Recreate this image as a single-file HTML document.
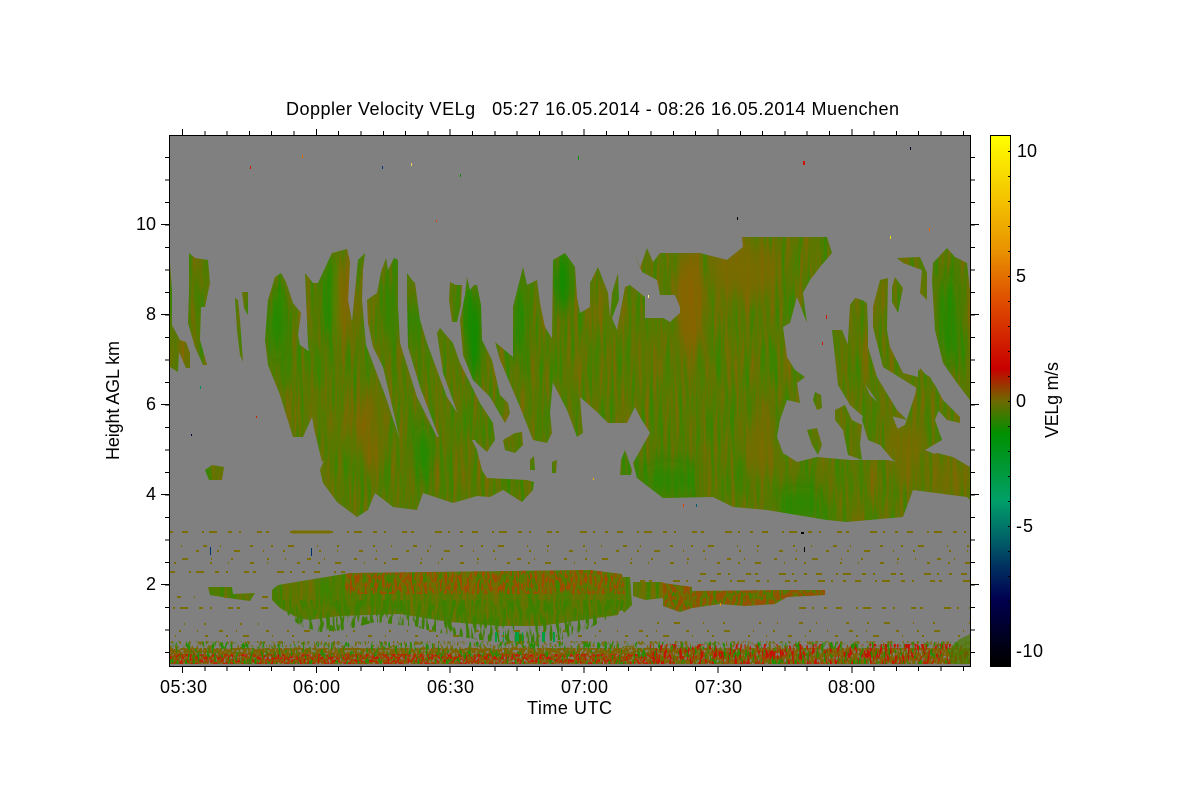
<!DOCTYPE html>
<html><head><meta charset="utf-8"><title>Doppler Velocity VELg</title>
<style>html,body{margin:0;padding:0;background:#fff}svg{display:block}
text{font-family:"Liberation Sans",sans-serif;font-size:18px;fill:#000}</style></head>
<body>
<svg width="1200" height="800" viewBox="0 0 1200 800" xmlns="http://www.w3.org/2000/svg">
<defs>
<linearGradient id="cb" gradientUnits="userSpaceOnUse" x1="0" y1="135" x2="0" y2="666">
<stop offset="0" stop-color="#ffff00"/><stop offset=".16" stop-color="#f0b000"/><stop offset=".222" stop-color="#e89000"/><stop offset=".286" stop-color="#e06000"/><stop offset=".31" stop-color="#e05000"/><stop offset=".44" stop-color="#c80000"/><stop offset=".5" stop-color="#706800"/><stop offset=".562" stop-color="#009000"/><stop offset=".688" stop-color="#00a068"/><stop offset=".762" stop-color="#006068"/><stop offset=".814" stop-color="#003060"/><stop offset=".875" stop-color="#000050"/><stop offset=".97" stop-color="#000010"/><stop offset="1" stop-color="#000"/>
</linearGradient>
<filter id="noise" filterUnits="userSpaceOnUse" x="169" y="135" width="802" height="532" color-interpolation-filters="sRGB">
<feTurbulence type="fractalNoise" baseFrequency="0.28 0.018" numOctaves="3" seed="7"/>
<feColorMatrix type="matrix" values=".5 0 0 0 .1  -.2 0 0 0 .57  0 0 0 0 0  0 0 0 0 1"/>
</filter>
<filter id="blur"><feGaussianBlur stdDeviation="4 12"/></filter>
<filter id="spOlive" filterUnits="userSpaceOnUse" x="170" y="625" width="800" height="40" color-interpolation-filters="sRGB"><feTurbulence type="fractalNoise" baseFrequency=".42 .22" numOctaves="2" seed="3"/><feColorMatrix type="matrix" values="0 0 0 0 .47  0 0 0 0 .42  0 0 0 0 0  14 0 0 0 -7.6"/></filter>
<filter id="spDense" filterUnits="userSpaceOnUse" x="170" y="648" width="800" height="16" color-interpolation-filters="sRGB"><feTurbulence type="fractalNoise" baseFrequency=".45 .3" numOctaves="2" seed="11"/><feColorMatrix type="matrix" values="0 0 0 0 .5  0 0 0 0 .38  0 0 0 0 0  14 0 0 0 -5.2"/></filter>
<filter id="spRedL" filterUnits="userSpaceOnUse" x="170" y="654" width="490" height="10" color-interpolation-filters="sRGB"><feTurbulence type="fractalNoise" baseFrequency=".5 .35" numOctaves="2" seed="5"/><feColorMatrix type="matrix" values="0 0 0 0 .76  0 0 0 0 .1  0 0 0 0 0  14 0 0 0 -7"/></filter>
<filter id="spRedR" filterUnits="userSpaceOnUse" x="650" y="644" width="320" height="20" color-interpolation-filters="sRGB"><feTurbulence type="fractalNoise" baseFrequency=".4 .1" numOctaves="2" seed="9"/><feColorMatrix type="matrix" values="0 0 0 0 .76  0 0 0 0 .08  0 0 0 0 0  14 0 0 0 -7.4"/></filter>
<filter id="spGreen" filterUnits="userSpaceOnUse" x="170" y="642" width="800" height="22" color-interpolation-filters="sRGB"><feTurbulence type="fractalNoise" baseFrequency=".42 .12" numOctaves="2" seed="21"/><feColorMatrix type="matrix" values="0 0 0 0 .14  0 0 0 0 .55  0 0 0 0 0  14 0 0 0 -8.2"/></filter>
<filter id="spBandG" filterUnits="userSpaceOnUse" x="272" y="600" width="355" height="46" color-interpolation-filters="sRGB"><feTurbulence type="fractalNoise" baseFrequency=".3 .06" numOctaves="2" seed="14"/><feColorMatrix type="matrix" values="0 0 0 0 .24  0 0 0 0 .5  0 0 0 0 0  14 0 0 0 -7"/></filter>
<filter id="spBandR" filterUnits="userSpaceOnUse" x="345" y="570" width="280" height="24" color-interpolation-filters="sRGB"><feTurbulence type="fractalNoise" baseFrequency=".4 .12" numOctaves="2" seed="17"/><feColorMatrix type="matrix" values="0 0 0 0 .62  0 0 0 0 .3  0 0 0 0 0  14 0 0 0 -7"/></filter>
<filter id="spBrown" filterUnits="userSpaceOnUse" x="663" y="583" width="165" height="30" color-interpolation-filters="sRGB"><feTurbulence type="fractalNoise" baseFrequency=".3 .14" numOctaves="2" seed="2"/><feColorMatrix type="matrix" values="0 0 0 0 .58  0 0 0 0 .32  0 0 0 0 0  14 0 0 0 -6.4"/></filter>
<clipPath id="fringe"><polygon points="274,600 285,612 300,626 320,632 345,630 375,622 410,626 445,634 480,640 520,644 560,640 590,628 622,610 625,600"/></clipPath>
<clipPath id="c">
<polygon points="265,340 268,300 275,277 281,273 286,282 293,303 301,313 298,335 300,345 318,358 330,420 335,450 322,462 315,433 312,417 303,437 293,437 280,395 268,365"/>
<polygon points="305,273 313,283 318,283 332,253 347,249 350,262 348,300 352,322 358,260 365,253 363,270 362,300 366,345 385,395 400,440 398,480 340,480 320,440 308,345"/>
<polygon points="367,300 377,293 381,272 386,258 388,270 394,258 398,260 398,307 400,343 417,397 437,437 420,453 400,440 383,367 373,347 368,323"/>
<polygon points="407,273 412,280 415,283 420,320 427,343 447,397 460,417 475,440 440,440 420,387 408,347 407,300"/>
<polygon points="437,333 440,328 453,343 460,363 480,403 493,423 495,440 487,452 477,443 460,420 443,373"/>
<polygon points="450,282 456,285 462,285 461,305 457,322 452,322 449,300"/>
<polygon points="467,277 470,290 474,285 477,285 481,305 482,340 492,360 500,395 508,403 510,413 505,423 490,397 473,380 463,355 460,320 465,295"/>
<polygon points="495,342 513,357 513,307 523,267 527,285 537,280 540,303 545,327 553,340 553,380 550,413 552,433 547,443 533,440 520,407 500,360"/>
<polygon points="503,440 515,433 522,432 523,445 515,453 505,450"/>
<polygon points="530,460 534,456 535,470 530,470"/><polygon points="552,462 557,460 556,473 552,473"/>
<polygon points="320,470 327,453 340,440 470,436 477,450 482,470 487,478 527,480 534,482 533,490 522,502 503,490 490,497 477,496 453,503 423,493 417,510 393,507 375,493 368,510 357,517 337,502 323,483"/>
<polygon points="205,470 212,465 224,467 222,480 209,480"/>
<polygon points="189,253 195,258 208,260 210,283 205,307 201,307 200,340 207,365 203,365 195,347 188,323 189,290"/>
<polygon points="170,263 172,290 172,325 180,340 186,342 190,353 190,368 186,368 179,352 178,372 170,367"/>
<polygon points="242,292 248,292 248,315 244,308"/><polygon points="235,298 238,300 240,320 243,362 240,355 237,330"/>
<polygon points="553,260 565,253 575,267 577,297 580,313 590,307 590,283 598,267 608,293 610,317 612,293 618,273 619,300 612,318 617,330 625,287 630,285 645,297 645,318 663,318 672,323 680,340 670,425 650,430 643,420 635,407 627,423 617,423 608,423 597,412 580,397 582,423 583,433 577,437 567,410 553,383 552,340"/>
<polygon points="633,250 640,268 647,248 653,262 660,253 700,253 727,260 743,247 742,237 827,237 832,253 820,267 810,280 803,293 807,323 797,297 790,323 783,327 787,357 795,370 805,377 797,383 800,403 787,400 780,420 777,437 783,453 797,462 817,457 850,460 887,460 903,463 937,453 953,457 970,467 970,500 967,497 913,490 903,517 847,522 827,520 767,510 733,507 713,497 663,498 637,478 633,463 650,433 640,417 635,407 645,395 665,330 672,320 680,313 680,307 675,295 660,295 657,280 642,272"/>
<polygon points="621,460 625,450 632,470 631,475 620,475"/>
<polygon points="807,430 817,428 822,445 818,455 812,445"/>
<polygon points="815,392 821,395 822,408 817,410 813,400"/>
<polygon points="832,330 842,330 852,355 870,395 892,415 898,430 895,450 880,440 867,420 850,405 838,385"/>
<polygon points="850,305 855,298 862,300 867,303 868,330 868,347 877,377 897,410 907,420 887,415 867,387 847,357"/>
<polygon points="873,307 880,280 888,278 887,330 890,347 903,373 918,377 918,370 930,377 943,400 960,417 960,423 947,420 920,390 883,367 873,327"/>
<polygon points="892,287 895,277 903,288 898,313 892,302"/>
<polygon points="897,258 920,257 927,273 927,300 920,293 922,270 903,263"/>
<polygon points="933,263 947,248 955,257 967,263 970,290 970,400 957,383 943,363 935,330 932,280"/>
<polygon points="865,405 875,425 895,430 905,425 915,395 920,368 935,385 943,400 935,420 942,440 925,450 937,455 903,465 893,460 880,445 868,440 862,420"/>
<polygon points="835,410 845,405 852,420 862,425 860,445 862,460 848,455 843,430 835,420"/>
<polygon points="272,590 278,585 350,573 590,570 622,574 625,595 618,615 540,626 500,626 450,622 400,614 340,616 310,620 298,618 280,608 272,600"/>
<polygon points="620,577 630,577 632,605 624,613 620,606"/>
<polygon points="633,582 663,582 663,598 645,600 633,596"/>
<polygon points="663,583 692,587 692,591 787,590 825,590 825,595 787,597 775,604 745,606 720,604 692,608 680,612 663,606"/>
<polygon points="208,587 232,587 233,594 255,593 250,601 228,598 210,595"/>
</clipPath>
</defs>
<rect width="1200" height="800" fill="#fff"/>
<g shape-rendering="crispEdges">
<rect x="169" y="135" width="801" height="531" fill="#808080"/>
<g clip-path="url(#c)">
<rect x="169" y="135" width="802" height="532" filter="url(#noise)"/>
<g filter="url(#blur)">
<ellipse cx="278" cy="325" rx="9" ry="35" fill="#109000" opacity=".7"/>
<ellipse cx="330" cy="300" rx="9" ry="40" fill="#109000" opacity=".7"/>
<ellipse cx="392" cy="310" rx="6" ry="40" fill="#109000" opacity=".6"/>
<ellipse cx="415" cy="330" rx="5" ry="40" fill="#109000" opacity=".6"/>
<ellipse cx="474" cy="335" rx="8" ry="45" fill="#009000" opacity=".8"/>
<ellipse cx="520" cy="320" rx="7" ry="45" fill="#109000" opacity=".7"/>
<ellipse cx="563" cy="285" rx="8" ry="30" fill="#009000" opacity=".8"/>
<ellipse cx="423" cy="450" rx="10" ry="25" fill="#109000" opacity=".7"/>
<ellipse cx="950" cy="320" rx="10" ry="45" fill="#109000" opacity=".7"/>
<ellipse cx="800" cy="505" rx="25" ry="18" fill="#109000" opacity=".7"/>
<ellipse cx="670" cy="480" rx="30" ry="18" fill="#109000" opacity=".7"/>
<ellipse cx="345" cy="300" rx="8" ry="45" fill="#906000" opacity=".7"/>
<ellipse cx="370" cy="430" rx="12" ry="40" fill="#906000" opacity=".6"/>
<ellipse cx="690" cy="300" rx="14" ry="55" fill="#906000" opacity=".8"/>
<ellipse cx="745" cy="270" rx="35" ry="30" fill="#806800" opacity=".8"/>
<ellipse cx="760" cy="450" rx="14" ry="30" fill="#806800" opacity=".7"/>
<ellipse cx="905" cy="445" rx="20" ry="25" fill="#806800" opacity=".7"/>
<ellipse cx="950" cy="480" rx="18" ry="18" fill="#806800" opacity=".6"/>
<ellipse cx="185" cy="350" rx="6" ry="10" fill="#906000" opacity=".7"/>
</g>
</g>
<!-- 2 km layer fringes -->
<rect x="345" y="570" width="280" height="24" filter="url(#spBandR)" clip-path="url(#c)"/>
<rect x="663" y="583" width="165" height="30" filter="url(#spBrown)" clip-path="url(#c)"/>
<g clip-path="url(#fringe)"><rect x="272" y="600" width="355" height="46" filter="url(#spBandG)"/></g>
<line x1="495" y1="637" x2="560" y2="637" stroke="#00a040" stroke-width="10" stroke-dasharray="2 6 1 11 4 3 1 19 3 8 2 5 6 13 1 9 2 24"/>
<!-- sparse range-gate stripes -->
<g fill="none" stroke="#7a6e00">
<g stroke-dasharray="3 9 6 14 2 5 8 11 4 7 2 16 5 4 3 21 7 6 2 10" stroke-width="2">
<line x1="170" y1="532" x2="970" y2="532"/><line x1="170" y1="572" x2="345" y2="572" stroke-dashoffset="13"/><line x1="700" y1="574" x2="970" y2="574" stroke-dashoffset="41"/><line x1="630" y1="581" x2="970" y2="581" stroke-dashoffset="77"/><line x1="170" y1="608" x2="270" y2="608" stroke-dashoffset="29"/><line x1="780" y1="608" x2="970" y2="608" stroke-dashoffset="101"/>
</g>
<line x1="292" y1="532" x2="330" y2="532" stroke-width="3"/>
<g stroke-dasharray="2 16 1 21 4 13 1 29 3 18 2 15 6 23 1 19 2 34" stroke-width="2">
<line x1="170" y1="546" x2="970" y2="546" stroke-dashoffset="7"/><line x1="170" y1="551" x2="970" y2="551" stroke-dashoffset="61"/><line x1="170" y1="559" x2="970" y2="559" stroke-dashoffset="113"/><line x1="170" y1="563" x2="970" y2="563" stroke-dashoffset="170"/><line x1="170" y1="597" x2="270" y2="597" stroke-dashoffset="33"/><line x1="640" y1="623" x2="970" y2="623" stroke-dashoffset="91"/><line x1="170" y1="624" x2="280" y2="624" stroke-dashoffset="140"/><line x1="170" y1="631" x2="970" y2="631" stroke-dashoffset="201"/><line x1="170" y1="636" x2="970" y2="636" stroke-dashoffset="52"/>
</g>
</g>
<!-- near-ground clutter -->
<rect x="170" y="625" width="800" height="40" filter="url(#spOlive)" opacity=".9" clip-path="inset(16px 0 0 0)"/>
<rect x="170" y="648" width="800" height="16" filter="url(#spDense)"/>
<rect x="170" y="654" width="490" height="10" filter="url(#spRedL)"/>
<rect x="650" y="644" width="320" height="20" filter="url(#spRedR)"/>
<rect x="170" y="642" width="800" height="22" filter="url(#spGreen)"/>
<polygon points="950,650 958,640 970,634 970,664 950,664" fill="#4a7c00" opacity=".7"/>
<rect x="169" y="664" width="801" height="2" fill="#808080"/>
<!-- speckles -->
<g>
<rect x="250" y="166" width="1" height="3" fill="#d01000"/><rect x="302" y="155" width="1" height="3" fill="#e07000"/><rect x="382" y="166" width="1" height="3" fill="#003080"/><rect x="411" y="163" width="1" height="3" fill="#f0d060"/><rect x="436" y="220" width="1" height="2" fill="#d04000"/><rect x="460" y="174" width="1" height="3" fill="#109000"/><rect x="578" y="156" width="1" height="4" fill="#109000"/><rect x="737" y="217" width="1" height="3" fill="#000"/><rect x="803" y="161" width="2" height="4" fill="#d01000"/><rect x="910" y="147" width="1" height="3" fill="#000030"/><rect x="890" y="236" width="1" height="3" fill="#f0e000"/><rect x="929" y="228" width="1" height="3" fill="#e06000"/><rect x="256" y="416" width="1" height="2" fill="#c82000"/><rect x="191" y="434" width="1" height="2" fill="#000040"/><rect x="200" y="386" width="1" height="3" fill="#009060"/><rect x="210" y="547" width="1" height="8" fill="#003070"/><rect x="311" y="548" width="1" height="8" fill="#003070"/><rect x="801" y="532" width="3" height="2" fill="#000"/><rect x="804" y="547" width="1" height="5" fill="#000"/><rect x="720" y="603" width="1" height="3" fill="#e09000"/><rect x="826" y="315" width="1" height="4" fill="#d01000"/><rect x="822" y="342" width="1" height="3" fill="#d01000"/><rect x="683" y="504" width="1" height="3" fill="#e04000"/><rect x="696" y="504" width="1" height="3" fill="#006070"/><rect x="648" y="295" width="1" height="3" fill="#ffee80"/><rect x="593" y="478" width="1" height="2" fill="#f0b000"/>
</g>
<!-- axes -->
<rect x="169.5" y="135.5" width="801" height="531" fill="none" stroke="#000"/>
<g stroke="#000" fill="none">
<line x1="182" y1="133" x2="971" y2="133" stroke-width="4" stroke-dasharray="1 21.31"/>
<line x1="182" y1="132" x2="971" y2="132" stroke-width="6" stroke-dasharray="1 132.86"/>
<line x1="182" y1="669" x2="971" y2="669" stroke-width="4" stroke-dasharray="1 21.31"/>
<line x1="182" y1="670" x2="971" y2="670" stroke-width="6" stroke-dasharray="1 132.86"/>
<line x1="167" y1="157" x2="167" y2="666" stroke-width="4" stroke-dasharray="1 21.5"/>
<line x1="165" y1="224" x2="165" y2="666" stroke-width="8" stroke-dasharray="1 89"/>
<line x1="973" y1="157" x2="973" y2="666" stroke-width="4" stroke-dasharray="1 21.5"/>
<line x1="975" y1="224" x2="975" y2="666" stroke-width="8" stroke-dasharray="1 89"/>
</g>
<!-- colour bar -->
<rect x="990.5" y="135.5" width="20" height="531" fill="url(#cb)" stroke="#000"/>
<line x1="1009" y1="151" x2="1009" y2="660" stroke="#000" stroke-width="2" stroke-dasharray="1 24"/>
</g>
<text x="286" y="115" textLength="613" lengthAdjust="spacing" xml:space="preserve">Doppler Velocity VELg   05:27 16.05.2014 - 08:26 16.05.2014 Muenchen</text>
<g text-anchor="end">
<text x="156" y="230">10</text><text x="156" y="320">8</text><text x="156" y="410">6</text><text x="156" y="500">4</text><text x="156" y="590">2</text>
</g>
<text x="160" y="693" textLength="47">05:30</text><text x="293" y="693" textLength="47">06:00</text><text x="427" y="693" textLength="47">06:30</text><text x="561" y="693" textLength="47">07:00</text><text x="695" y="693" textLength="47">07:30</text><text x="828" y="693" textLength="47">08:00</text>
<text x="527" y="714" textLength="85">Time UTC</text>
<text transform="translate(119,460) rotate(-90)" textLength="119">Height AGL km</text>
<text x="1017" y="157" textLength="20">10</text><text x="1016" y="282">5</text><text x="1016" y="407">0</text><text x="1016" y="532" textLength="17">-5</text><text x="1016" y="657" textLength="27">-10</text>
<text transform="translate(1058,438) rotate(-90)" textLength="76">VELg m/s</text>
</svg>
</body></html>
